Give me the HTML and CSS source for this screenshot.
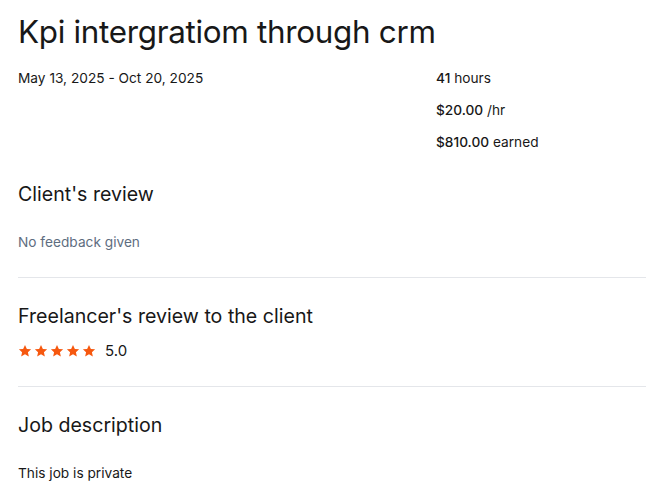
FILE: index.html
```html
<!DOCTYPE html>
<html lang="en">
<head>
  <meta charset="utf-8">
  <title>Kpi intergratiom through crm</title>
  <link rel="stylesheet" href="styles.css">
</head>
<body>
  <main class="job">
    <h1 class="job-title">Kpi intergratiom through crm</h1>

    <div class="summary">
      <p class="dates">May 13, 2025 - Oct 20, 2025</p>
      <ul class="stats">
        <li><strong>41</strong> hours</li>
        <li><strong>$20.00</strong> /hr</li>
        <li><strong>$810.00</strong> earned</li>
      </ul>
    </div>

    <section class="block">
      <h2>Client's review</h2>
      <p class="muted">No feedback given</p>
    </section>

    <section class="block">
      <h2>Freelancer's review to the client</h2>
      <div class="rating">
        <span class="stars">
          <svg viewBox="0 0 24 24"><path d="M12 1.5l3.2 6.9 7.3.8-5.5 5 1.6 7.3L12 17.7l-6.6 3.8L7 14.2l-5.5-5 7.3-.8z"/></svg>
          <svg viewBox="0 0 24 24"><path d="M12 1.5l3.2 6.9 7.3.8-5.5 5 1.6 7.3L12 17.7l-6.6 3.8L7 14.2l-5.5-5 7.3-.8z"/></svg>
          <svg viewBox="0 0 24 24"><path d="M12 1.5l3.2 6.9 7.3.8-5.5 5 1.6 7.3L12 17.7l-6.6 3.8L7 14.2l-5.5-5 7.3-.8z"/></svg>
          <svg viewBox="0 0 24 24"><path d="M12 1.5l3.2 6.9 7.3.8-5.5 5 1.6 7.3L12 17.7l-6.6 3.8L7 14.2l-5.5-5 7.3-.8z"/></svg>
          <svg viewBox="0 0 24 24"><path d="M12 1.5l3.2 6.9 7.3.8-5.5 5 1.6 7.3L12 17.7l-6.6 3.8L7 14.2l-5.5-5 7.3-.8z"/></svg>
        </span>
        <span class="score">5.0</span>
      </div>
    </section>

    <section class="block">
      <h2>Job description</h2>
      <p class="plain">This job is private</p>
    </section>
  </main>
</body>
</html>
```

FILE: styles.css
```css
body {
  margin: 0;
  font-family: Inter, "Liberation Sans", sans-serif;
  color: #181818;
  background: #ffffff;
}

.job {
  padding: 12px 0 0 18px;
}

.job-title {
  margin: 0;
  font-size: 31.4px;
  font-weight: 400;
  line-height: 40px;
  letter-spacing: -0.3px;
}

.summary {
  display: flex;
  margin: 16px 0 4px;
}

.dates {
  width: 418px;
  margin: 0;
  font-size: 13.7px;
  line-height: 20px;
}

.stats {
  list-style: none;
  margin: 0;
  padding: 0;
  font-size: 13.7px;
  line-height: 20px;
  display: flex;
  flex-direction: column;
  gap: 12px;
}

.stats strong {
  font-weight: 500;
}

.block {
  border-bottom: 1px solid #e4e6ea;
  padding: 25px 0;
}

.block:last-child {
  border-bottom: none;
}

.block h2 {
  margin: 0;
  font-size: 19.6px;
  font-weight: 400;
  line-height: 26px;
}

.muted {
  margin: 25px 0 0;
  font-size: 13.7px;
  line-height: 20px;
  color: #5e6d80;
}

.plain {
  margin: 25px 0 0;
  font-size: 13.7px;
  line-height: 20px;
}

.rating {
  display: flex;
  align-items: center;
  gap: 9px;
  margin-top: 12px;
}

.stars {
  display: flex;
  gap: 2px;
}

.stars svg {
  width: 14px;
  height: 14px;
  fill: #f6580f;
}

.score {
  font-size: 15px;
  line-height: 20px;
}
```
